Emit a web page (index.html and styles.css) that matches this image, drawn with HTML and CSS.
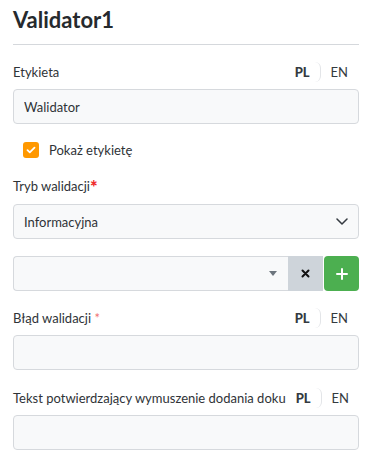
FILE: index.html
```html
<!DOCTYPE html>
<html>
  <head>
    <meta charset="UTF-8">
    <title>Validator1</title>
    <link rel="stylesheet" href="styles.css">
  </head>
  <body>
    <h1>Validator1</h1>
    <hr>

    <div class="field first">
      <div class="label-row">
        <label>Etykieta</label>
        <span class="langs"><span class="lang active">PL</span><span class="lang">EN</span></span>
      </div>
      <input type="text" class="control" value="Walidator">
    </div>

    <div class="check">
      <span class="box">
        <svg width="10" height="8" viewBox="0 0 10 8"><path d="M1.5 4.2 L3.8 6.3 L8.5 1.7" fill="none" stroke="#fff" stroke-width="1.8" stroke-linecap="round" stroke-linejoin="round"/></svg>
      </span>
      <span>Pokaż etykietę</span>
    </div>

    <div class="field mode">
      <div class="label-row">
        <label>Tryb walidacji<span class="req">*</span></label>
      </div>
      <div class="control select">
        <span>Informacyjna</span>
        <svg width="12" height="7" viewBox="0 0 12 7"><path d="M1 1 L6 6 L11 1" fill="none" stroke="#343a40" stroke-width="1.5" stroke-linecap="round" stroke-linejoin="round"/></svg>
      </div>
    </div>

    <div class="combo">
      <div class="combo-input">
        <span class="caret"></span>
      </div>
      <span class="clear">
        <svg width="9" height="9" viewBox="0 0 9 9"><path d="M1.5 1.5 L7.5 7.5 M7.5 1.5 L1.5 7.5" stroke="#111" stroke-width="2" stroke-linecap="round"/></svg>
      </span>
      <span class="add">
        <svg width="12" height="12" viewBox="0 0 12 12"><path d="M6 1 V11 M1 6 H11" stroke="#fff" stroke-width="2" stroke-linecap="round"/></svg>
      </span>
    </div>

    <div class="field">
      <div class="label-row">
        <label>Błąd walidacji <span class="req light">*</span></label>
        <span class="langs"><span class="lang active">PL</span><span class="lang">EN</span></span>
      </div>
      <input type="text" class="control">
    </div>

    <div class="field last">
      <div class="label-row">
        <label>Tekst potwierdzający wymuszenie dodania doku</label>
        <span class="langs"><span class="lang active">PL</span><span class="lang">EN</span></span>
      </div>
      <input type="text" class="control">
    </div>
  </body>
</html>
```

FILE: styles.css
```css
body {
  margin: 0;
  padding: 0 10px 0 13px;
  background: #fff;
  color: #2f3337;
  font-family: Lato, "Noto Sans", sans-serif;
  font-size: 13px;
}

h1 {
  margin: 0;
  padding-top: 5px;
  font-size: 22px;
  font-weight: 700;
  line-height: 30px;
  color: #262a2e;
}

hr {
  border: none;
  border-top: 1px solid #d5d8dc;
  margin: 9px 0 0;
}

.field {
  margin-top: 14px;
}

.field.mode {
  margin-top: 16px;
}

.field.last {
  margin-top: 15px;
}

.label-row {
  display: flex;
  align-items: center;
  justify-content: space-between;
  height: 26px;
  margin-bottom: 4px;
}

label {
  white-space: nowrap;
}

.req {
  color: #ef2b2b;
  font-weight: 900;
  font-size: 18px;
  line-height: 1;
  vertical-align: -3px;
}

.req.light {
  color: #f07070;
  font-weight: 400;
  font-size: 13px;
  vertical-align: baseline;
}

.langs {
  display: flex;
  align-items: center;
  font-size: 13px;
  flex-shrink: 0;
}

.lang {
  padding: 2px 11px 2px 10px;
  color: #343a40;
}

.lang.active {
  padding: 2px 10px;
  font-weight: 900;
  border-right: 1px solid #e3e5e8;
  border-radius: 0 6px 6px 0;
}

.control {
  display: block;
  box-sizing: border-box;
  width: 100%;
  height: 35px;
  margin: 0;
  padding: 0 10px;
  background: #f8f9fa;
  border: 1px solid #d6d9dd;
  border-radius: 4px;
  font: inherit;
  color: #2f3337;
  outline: none;
}

.select {
  display: flex;
  align-items: center;
  justify-content: space-between;
}

.check {
  display: flex;
  align-items: center;
  gap: 10px;
  margin: 18px 0 0 10px;
  height: 16px;
}

.box {
  width: 16px;
  height: 16px;
  border-radius: 3px;
  background: #ff9800;
  display: flex;
  align-items: center;
  justify-content: center;
}

.combo {
  display: flex;
  height: 35px;
  margin-top: 17px;
}

.combo-input {
  flex: 1;
  display: flex;
  align-items: center;
  justify-content: flex-end;
  padding-right: 11px;
  background: #f8f9fa;
  border: 1px solid #d6d9dd;
  border-right: none;
  border-radius: 4px 0 0 4px;
}

.caret {
  border-left: 4.5px solid transparent;
  border-right: 4.5px solid transparent;
  border-top: 5px solid #6c757d;
}

.clear {
  width: 35px;
  display: flex;
  align-items: center;
  justify-content: center;
  background: #ced4da;
  margin-right: 1px;
}

.add {
  width: 35px;
  display: flex;
  align-items: center;
  justify-content: center;
  background: #4caf50;
  border-radius: 4px;
}
```
